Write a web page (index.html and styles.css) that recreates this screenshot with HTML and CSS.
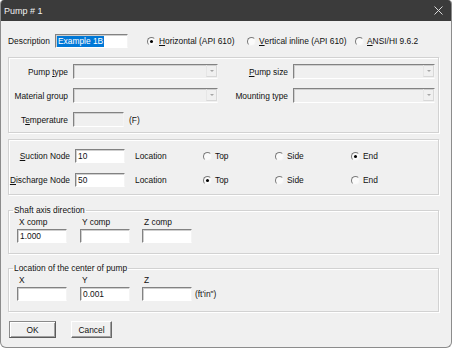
FILE: index.html
```html
<!DOCTYPE html>
<html lang="en">
<head>
    <meta charset="UTF-8">
    <title>Pump # 1</title>
    <link rel="stylesheet" href="styles.css">
</head>
<body>
    <div class="window">
        <div class="titlebar">
            <span class="title">Pump # 1</span>
            <svg class="close" width="9" height="9" viewBox="0 0 9 9">
                <path d="M0.5 0.5L8.5 8.5M8.5 0.5L0.5 8.5" stroke="#d9d9d9" stroke-width="1" fill="none"/>
            </svg>
        </div>

        <div class="content">
            <div class="desc-row">
                <label class="desc-label">Description</label>
                <div class="field desc-field"><span class="selected">Example 1B</span></div>
                <div class="radio-row">
                    <span class="radio checked"><i></i><u>H</u>orizontal (API 610)</span>
                    <span class="radio"><i></i><u>V</u>ertical inline (API 610)</span>
                    <span class="radio"><i></i><u>A</u>NSI/HI 9.6.2</span>
                </div>
            </div>

            <div class="group pump-grid">
                <label class="cell-label">Pump <u>t</u>ype</label>
                <div class="combo"><span class="arrow"></span></div>
                <label class="cell-label"><u>P</u>ump size</label>
                <div class="combo"><span class="arrow"></span></div>

                <label class="cell-label">Material group</label>
                <div class="combo"><span class="arrow"></span></div>
                <label class="cell-label">Mounting type</label>
                <div class="combo"><span class="arrow"></span></div>

                <label class="cell-label">T<u>e</u>mperature</label>
                <div class="temp-cell">
                    <div class="field disabled temp-field"></div>
                    <span class="unit">(F)</span>
                </div>
            </div>

            <div class="group node-grid">
                <label class="cell-label"><u>S</u>uction Node</label>
                <div class="field node-field">10</div>
                <span class="location">Location</span>
                <span class="radio"><i></i>Top</span>
                <span class="radio"><i></i>Side</span>
                <span class="radio checked"><i></i>End</span>

                <label class="cell-label"><u>D</u>ischarge Node</label>
                <div class="field node-field">50</div>
                <span class="location">Location</span>
                <span class="radio checked"><i></i>Top</span>
                <span class="radio"><i></i>Side</span>
                <span class="radio"><i></i>End</span>
            </div>

            <fieldset class="group coord-group">
                <legend>Shaft axis direction</legend>
                <div class="coords">
                    <div class="coord">
                        <label>X comp</label>
                        <div class="field coord-field">1.000</div>
                    </div>
                    <div class="coord">
                        <label>Y comp</label>
                        <div class="field coord-field"></div>
                    </div>
                    <div class="coord">
                        <label>Z comp</label>
                        <div class="field coord-field"></div>
                    </div>
                </div>
            </fieldset>

            <fieldset class="group coord-group center-group">
                <legend>Location of the center of pump</legend>
                <div class="coords">
                    <div class="coord">
                        <label>X</label>
                        <div class="field coord-field"></div>
                    </div>
                    <div class="coord">
                        <label>Y</label>
                        <div class="field coord-field">0.001</div>
                    </div>
                    <div class="coord">
                        <label>Z</label>
                        <div class="field coord-field"></div>
                    </div>
                    <span class="unit-ft">(ft'in")</span>
                </div>
            </fieldset>

            <div class="buttons">
                <button class="btn btn-default">OK</button>
                <button class="btn">Cancel</button>
            </div>
        </div>
    </div>
</body>
</html>
```

FILE: styles.css
```css
* {
    box-sizing: border-box;
}

body {
    margin: 0;
    background-color: #fff;
    font-family: 'Liberation Sans', Arial, sans-serif;
    font-size: 8.4px;
    color: #111;
}

.window {
    width: 452px;
    height: 348px;
    border: 1px solid #8c8c8c;
    border-top: none;
    border-radius: 4px 4px 6px 6px;
    background-color: #f0f0f0;
    overflow: hidden;
}

.titlebar {
    height: 21px;
    background-color: #3b3b3b;
    display: flex;
    align-items: center;
    justify-content: space-between;
    padding: 0 8px 0 3px;
    color: #f2f2f2;
    font-size: 9px;
}

.close {
    display: block;
}

.content {
    padding: 13px 0 0 7px;
}

u {
    text-decoration: underline;
    text-underline-offset: 1px;
}

/* description row */
.desc-row {
    display: flex;
    align-items: center;
    height: 14px;
}

.desc-label {
    width: 47px;
}

.field {
    height: 14px;
    background-color: #fff;
    border: 1px solid;
    border-color: #828282 #f4f4f4 #fff #828282;
    box-shadow: inset 1px 1px 0 #cfcfcf;
    line-height: 12px;
    padding-left: 2px;
    white-space: nowrap;
}

.field.disabled {
    background-color: #f0f0f0;
}

.desc-field {
    width: 73px;
    margin-right: 19px;
    padding-left: 1px;
}

.selected {
    display: inline-block;
    background-color: #0078d7;
    color: #fff;
    line-height: 11px;
    padding: 0 1px;
}

.radio-row {
    display: grid;
    grid-template-columns: 100px 108px auto;
}

.radio {
    display: flex;
    align-items: center;
    white-space: nowrap;
}

.radio i {
    position: relative;
    width: 9px;
    height: 9px;
    margin-right: 3px;
    border: 1px solid;
    border-color: #7a7a7a #f2f2f2 #f2f2f2 #7a7a7a;
    border-radius: 50%;
    background-color: #fafafa;
}

.radio.checked i::after {
    content: '';
    position: absolute;
    left: 2px;
    top: 2px;
    width: 3px;
    height: 3px;
    border-radius: 50%;
    background-color: #000;
}

/* group boxes */
.group {
    width: 431px;
    border: 1px solid #d2d2d2;
    box-shadow: inset 1px 1px 0 #fff, 1px 1px 0 #fff;
}

.cell-label {
    text-align: right;
    padding-right: 5px;
    white-space: nowrap;
}

.pump-grid {
    display: grid;
    grid-template-columns: 64px 145px 75px 142px;
    grid-auto-rows: 15px;
    row-gap: 9px;
    align-items: center;
    margin-top: 9px;
    padding: 6px 0 5px 0;
}

.combo {
    height: 15px;
    display: flex;
    justify-content: flex-end;
    background-color: #f0f0f0;
    border: 1px solid;
    border-color: #828282 #f4f4f4 #fff #828282;
    box-shadow: inset 1px 1px 0 #cfcfcf;
}

.arrow {
    width: 11px;
    height: 12px;
    border-left: 1px solid #e6e6e6;
    border-bottom: 1px solid #d8d8d8;
    border-right: 1px solid #d8d8d8;
    position: relative;
}

.arrow::after {
    content: '';
    position: absolute;
    left: 3px;
    top: 5px;
    border-left: 2px solid transparent;
    border-right: 2px solid transparent;
    border-top: 2px solid #a6a6a6;
}

.temp-cell {
    display: flex;
    align-items: center;
}

.temp-field {
    width: 51px;
    height: 15px;
}

.unit {
    margin-left: 5px;
}

.node-grid {
    display: grid;
    grid-template-columns: 66px 50px 78px 72px 76px auto;
    grid-auto-rows: 14px;
    row-gap: 10px;
    align-items: center;
    margin-top: 6px;
    padding: 9px 0 7px 0;
}

.location {
    padding-left: 10px;
}

/* fieldsets with a caption */
.coord-group {
    margin: 10px 0 0;
    padding: 0;
    min-width: 0;
}

.center-group {
    margin-top: 9px;
}

.coord-group legend {
    margin-left: 4px;
    padding: 0 1px;
    line-height: 10px;
}

.coords {
    display: grid;
    grid-template-columns: 63px 62px 50px auto;
    padding: 2px 0 10px 8px;
}

.coord {
    display: flex;
    flex-direction: column;
}

.coord label {
    line-height: 11px;
    padding-left: 2px;
}

.coord-field {
    width: 50px;
    margin-top: 1px;
}

.unit-ft {
    align-self: end;
    margin: 0 0 2px 3px;
}

/* buttons */
.buttons {
    display: flex;
    gap: 15px;
    margin: 9px 0 0 1px;
}

.btn {
    height: 17px;
    width: 41px;
    padding: 0;
    font-family: inherit;
    font-size: 8.4px;
    color: #111;
    background-color: #f0f0f0;
    border: 1px solid;
    border-color: #fff #696969 #696969 #fff;
    box-shadow: inset -1px -1px 0 #a0a0a0;
}

.btn-default {
    width: 47px;
    border-color: #8a8a8a #5a5a5a #5a5a5a #8a8a8a;
    box-shadow: inset 1px 1px 0 #fff, inset -1px -1px 0 #a0a0a0;
}
```
